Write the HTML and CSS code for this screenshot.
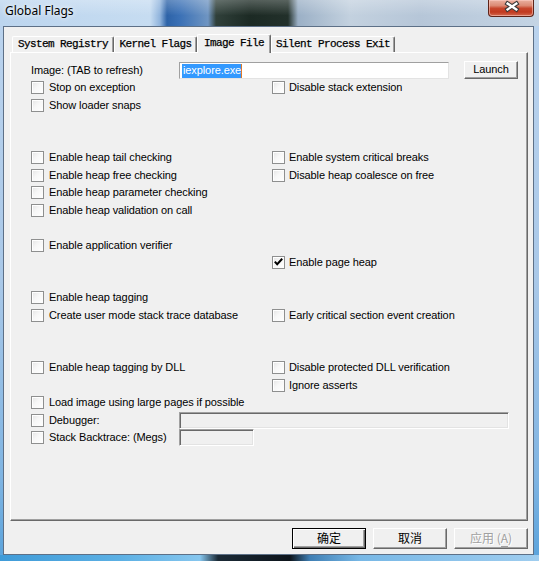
FILE: index.html
```html
<!DOCTYPE html>
<html>
<head>
<meta charset="utf-8">
<title>Global Flags</title>
<link rel="stylesheet" href="styles.css">
</head>
<body>
<div class="window">
  <div class="titlebar">
    <span class="title">Global Flags</span>
    <div class="close">
      <svg width="46" height="17" viewBox="0 0 46 17">
        <path d="M20 4.5 L29 10.5 M29 4.5 L20 10.5" stroke="#3a3a3a" stroke-width="4.6" stroke-linecap="square" fill="none"/>
        <path d="M20 4.5 L29 10.5 M29 4.5 L20 10.5" stroke="#ffffff" stroke-width="2.4" stroke-linecap="square" fill="none"/>
      </svg>
    </div>
  </div>
  <div class="client">
    <div class="tabs">
      <div class="tab t1">System Registry</div>
      <div class="tab t2">Kernel Flags</div>
      <div class="tab t3 active">Image File</div>
      <div class="tab t4">Silent Process Exit</div>
    </div>
    <div class="panel">
      <div class="row toprow">
        <span class="img-label">Image: (TAB to refresh)</span>
        <div class="edit image-edit"><span class="sel">iexplore.exe</span><span class="caret"></span></div>
        <div class="btn launch">Launch</div>
      </div>
      <div class="row">
        <label class="cb"><span class="box"></span>Stop on exception</label>
        <label class="cb"><span class="box"></span>Disable stack extension</label>
      </div>
      <div class="row">
        <label class="cb"><span class="box"></span>Show loader snaps</label>
      </div>
      <div class="row"></div>
      <div class="row"></div>
      <div class="row">
        <label class="cb"><span class="box"></span>Enable heap tail checking</label>
        <label class="cb"><span class="box"></span>Enable system critical breaks</label>
      </div>
      <div class="row">
        <label class="cb"><span class="box"></span>Enable heap free checking</label>
        <label class="cb"><span class="box"></span>Disable heap coalesce on free</label>
      </div>
      <div class="row">
        <label class="cb"><span class="box"></span>Enable heap parameter checking</label>
      </div>
      <div class="row">
        <label class="cb"><span class="box"></span>Enable heap validation on call</label>
      </div>
      <div class="row"></div>
      <div class="row">
        <label class="cb"><span class="box"></span>Enable application verifier</label>
      </div>
      <div class="row">
        <span></span>
        <label class="cb"><span class="box checked"><svg width="11" height="11" viewBox="0 0 11 11"><path d="M1.8 4.6 L4.2 7.2 L9.2 1.8" stroke="#000" stroke-width="2" fill="none"/></svg></span>Enable page heap</label>
      </div>
      <div class="row"></div>
      <div class="row">
        <label class="cb"><span class="box"></span>Enable heap tagging</label>
      </div>
      <div class="row">
        <label class="cb"><span class="box"></span>Create user mode stack trace database</label>
        <label class="cb"><span class="box"></span>Early critical section event creation</label>
      </div>
      <div class="row"></div>
      <div class="row"></div>
      <div class="row">
        <label class="cb"><span class="box"></span>Enable heap tagging by DLL</label>
        <label class="cb"><span class="box"></span>Disable protected DLL verification</label>
      </div>
      <div class="row">
        <span></span>
        <label class="cb"><span class="box"></span>Ignore asserts</label>
      </div>
      <div class="row">
        <label class="cb"><span class="box"></span>Load image using large pages if possible</label>
      </div>
      <div class="row wide">
        <label class="cb fixed"><span class="box"></span>Debugger:</label>
        <div class="edit disabled dbg-edit"></div>
      </div>
      <div class="row wide">
        <label class="cb fixed"><span class="box"></span>Stack Backtrace: (Megs)</label>
        <div class="edit disabled stack-edit"></div>
      </div>
    </div>
    <div class="buttons">
      <div class="btn dlg default">确定</div>
      <div class="btn dlg">取消</div>
      <div class="btn dlg disabled-btn">应用 (<u>A</u>)</div>
    </div>
  </div>
</div>
</body>
</html>
```

FILE: styles.css
```css
html, body {
  margin: 0;
  padding: 0;
}

body {
  width: 539px;
  height: 561px;
  overflow: hidden;
  font-family: "Liberation Sans", Arial, sans-serif;
  font-size: 11px;
  letter-spacing: -0.1px;
  color: #000;
}

.window {
  width: 539px;
  height: 561px;
  display: flex;
  flex-direction: column;
  background:
    linear-gradient(90deg, #3f9bd8 0, #5cb0e4 120px, #86c6ee 200px, #1b2a36 218px, #0d141b 290px, #3f7fb4 310px, #78b8e6 360px, #9fcdef 539px) left bottom / 100% 6px no-repeat,
    linear-gradient(#bcd4ee 0, #a9c8e8 50%, #7fb4e2 85%, #5aa3dc 100%);
}

/* ---------- title bar ---------- */
.titlebar {
  height: 26px;
  display: flex;
  align-items: flex-start;
  flex: none;
  background:
    linear-gradient(rgba(255,255,255,0.25), rgba(255,255,255,0) 60%),
    linear-gradient(90deg,
      #bcd5ee 0, #c6dcf1 150px, #8fb3dc 160px, #2d63a8 167px, #3b71b6 180px,
      #6f95c2 208px, #30403a 216px, #1c2a24 250px, #22302a 288px,
      #9bb0c6 298px, #c3d1df 350px, #b6c6d8 420px, #c4d4e4 539px);
}

.title {
  margin: 3px 0 0 5px;
  font-family: "Noto Sans", "Open Sans", sans-serif;
  font-size: 12px;
  letter-spacing: 0;
  line-height: 16px;
  color: #000;
  text-shadow: 0 0 4px rgba(255,255,255,0.9), 0 0 8px rgba(255,255,255,0.7);
}

.close {
  margin-left: auto;
  margin-right: 5px;
  width: 46px;
  height: 17px;
  box-sizing: border-box;
  border: 1px solid #5e2318;
  border-top: none;
  border-radius: 0 0 4px 4px;
  background: linear-gradient(#eab0a0 0%, #dc8a74 35%, #c7462c 52%, #c1391f 75%, #d26a50 100%);
  box-shadow: inset 0 0 0 1px rgba(255, 210, 200, 0.55);
  display: flex;
  align-items: center;
  justify-content: center;
}

.close svg {
  display: block;
  margin: -1px 0 0 -1px;
}

/* ---------- client area ---------- */
.client {
  margin: 0 5px 0 3px;
  height: 529px;
  box-sizing: border-box;
  border: 1px solid #5d7087;
  background: #f0f0f0;
  display: flex;
  flex-direction: column;
}

/* ---------- tabs ---------- */
.tabs {
  display: flex;
  align-items: flex-end;
  height: 18px;
  margin: 7px 0 0 8px;
  position: relative;
  z-index: 1;
  flex: none;
}

.tab {
  box-sizing: border-box;
  height: 16px;
  border-left: 1px solid #ffffff;
  border-top: 1px solid #ffffff;
  border-right: 1px solid #696969;
  border-radius: 2px 2px 0 0;
  box-shadow: inset -1px 0 0 #a0a0a0;
  background: #f0f0f0;
  font-family: "Liberation Mono", "Courier New", monospace;
  font-size: 11px;
  letter-spacing: -0.6px;
  line-height: 15px;
  text-align: center;
  white-space: nowrap;
  -webkit-text-stroke: 0.25px #000;
}

.t1 { width: 102px; }
.t2 { width: 83px; }
.t3 { width: 74px; }
.t4 { width: 124px; }

.tab.active {
  height: 19px;
  margin-bottom: -1px;
  line-height: 16px;
  padding-bottom: 2px;
}

/* ---------- panel ---------- */
.panel {
  margin: 0 5px 0 6px;
  height: 469px;
  box-sizing: border-box;
  border-left: 1px solid #ffffff;
  border-top: 1px solid #ffffff;
  border-right: 1px solid #696969;
  border-bottom: 1px solid #696969;
  box-shadow: inset -1px -1px 0 #a0a0a0;
  padding: 8.25px 0 0 20px;
  flex: none;
}

.row {
  height: 17.5px;
  display: grid;
  grid-template-columns: 241px 1fr;
  align-items: center;
}

.row.toprow,
.row.wide {
  display: flex;
  align-items: center;
}

.img-label {
  width: 148px;
  flex: none;
}

.cb {
  display: flex;
  align-items: center;
  gap: 5px;
  white-space: nowrap;
  line-height: 13px;
}

.row > .cb:nth-child(2) {
  gap: 4px;
}

.cb.fixed {
  width: 148px;
  flex: none;
}

.box {
  width: 13px;
  height: 13px;
  box-sizing: border-box;
  border: 1px solid #8e8f8f;
  background: linear-gradient(135deg, #e4e4e4 0%, #f7f7f7 45%, #ffffff 100%);
  box-shadow: inset 1px 1px 0 #ffffff;
  flex: none;
  display: flex;
  align-items: center;
  justify-content: center;
}

.box svg {
  display: block;
}

/* ---------- edits ---------- */
.edit {
  box-sizing: border-box;
  height: 17px;
  border-style: solid;
  border-width: 1px;
  border-color: #a0a0a0 #e3e3e3 #e3e3e3 #a0a0a0;
  background: #ffffff;
  flex: none;
}

.image-edit {
  width: 270px;
  padding: 1px 0 0 2px;
  display: flex;
  align-items: stretch;
  height: 17px;
}

.sel {
  background: #3399ff;
  color: #ffffff;
  line-height: 13px;
  padding: 0 0 0 1px;
}

.caret {
  width: 1px;
  height: 14px;
  background: #e07b2a;
}

.edit.disabled {
  background: #f0f0f0;
  border-color: #a0a0a0 #ffffff #ffffff #a0a0a0;
  box-shadow: inset 1px 1px 0 #696969, inset -1px -1px 0 #e3e3e3;
}

.dbg-edit {
  width: 330px;
  height: 17px;
}

.stack-edit {
  width: 75px;
  height: 17px;
}

/* ---------- buttons ---------- */
.btn {
  box-sizing: border-box;
  border: 1px solid;
  border-color: #ffffff #696969 #696969 #ffffff;
  box-shadow: inset -1px -1px 0 #a0a0a0;
  background: #f0f0f0;
  text-align: center;
  flex: none;
}

.launch {
  width: 54px;
  height: 18px;
  margin-left: 15px;
  line-height: 15px;
}

.buttons {
  display: flex;
  justify-content: flex-end;
  gap: 7px;
  margin: 7px 5px 0 0;
  flex: none;
}

.btn.dlg {
  width: 74px;
  height: 21px;
  font-family: "Noto Sans CJK SC", "Noto Sans CJK JP", sans-serif;
  font-size: 12px;
  letter-spacing: 0;
  line-height: 18px;
}

.btn.default {
  border: 1px solid #000000;
  box-shadow: inset 1px 1px 0 #ffffff, inset -1px -1px 0 #696969, inset -2px -2px 0 #a0a0a0;
}

.btn.disabled-btn {
  color: #a0a0a0;
  text-shadow: 1px 1px 0 #ffffff;
}

.btn.disabled-btn u {
  text-decoration: none;
  border-bottom: 1px solid #a0a0a0;
  line-height: 12px;
}
```
